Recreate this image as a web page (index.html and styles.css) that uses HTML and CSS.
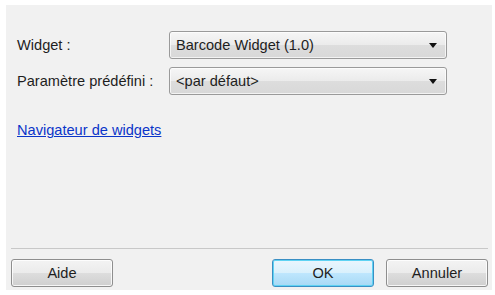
FILE: index.html
```html
<!DOCTYPE html>
<html lang="fr">
<head>
<meta charset="utf-8">
<link rel="stylesheet" href="styles.css">
</head>
<body>
<div class="dialog">
  <div class="content">
    <div class="row">
      <span class="label">Widget :</span>
      <div class="combo"><span class="value">Barcode Widget (1.0)</span><span class="arrow"></span></div>
    </div>
    <div class="row">
      <span class="label">Paramètre prédéfini :</span>
      <div class="combo"><span class="value">&lt;par défaut&gt;</span><span class="arrow"></span></div>
    </div>
    <a class="link" href="#">Navigateur de widgets</a>
  </div>
  <div class="footer">
    <button class="btn">Aide</button>
    <div class="spacer"></div>
    <button class="btn default">OK</button>
    <button class="btn">Annuler</button>
  </div>
</div>
</body>
</html>
```
FILE: styles.css
```css
html, body {
  margin: 0;
  padding: 0;
  background: #ffffff;
}
body {
  width: 495px;
  height: 295px;
  overflow: hidden;
  font-family: "Liberation Sans", Arial, sans-serif;
  font-size: 14.6px;
  color: #1e1e1e;
}
.dialog {
  margin: 5px 3px 5px 6px;
  height: 285px;
  background: #f1f1f1;
  display: flex;
  flex-direction: column;
  box-sizing: border-box;
}
.content {
  flex: 1;
  padding: 26px 0 0 11px;
  display: flex;
  flex-direction: column;
}
.row {
  display: flex;
  align-items: center;
  height: 28px;
  margin-bottom: 8px;
}
.label {
  width: 152px;
  white-space: nowrap;
}
.combo {
  width: 278px;
  height: 28px;
  box-sizing: border-box;
  border: 1px solid #9a9a9a;
  border-radius: 3px;
  background: linear-gradient(#f6f6f6, #ebebeb 50%, #dddddd 51%, #d8d8d8);
  display: flex;
  align-items: center;
  padding: 0 9px 0 6px;
  box-shadow: inset 0 0 0 1px rgba(255,255,255,0.7);
}
.value {
  flex: 1;
}
.arrow {
  width: 0;
  height: 0;
  border-left: 4px solid transparent;
  border-right: 4px solid transparent;
  border-top: 5px solid #111;
}
.link {
  margin-top: 19px;
  color: #0b35c9;
  text-decoration: underline;
  align-self: flex-start;
}
.footer {
  margin: 0 4px 3px 5px;
  border-top: 1px solid #c8c8c8;
  padding-top: 10px;
  display: flex;
  align-items: center;
  gap: 12px;
}
.spacer {
  flex: 1;
}
.btn {
  width: 102px;
  height: 28px;
  box-sizing: border-box;
  font-family: "Liberation Sans", Arial, sans-serif;
  font-size: 14.6px;
  color: #1e1e1e;
  border: 1px solid #8e8e8e;
  border-radius: 3px;
  background: linear-gradient(#f3f3f3, #ebebeb 50%, #dddddd 51%, #cfcfcf);
  box-shadow: inset 0 0 0 1px rgba(255,255,255,0.8);
  padding: 0;
}
.btn.default {
  border-color: #3a8fc4;
  background: linear-gradient(#eaf6fd, #d9f0fc 50%, #bee6fd 51%, #a7d9f5);
  box-shadow: inset 0 0 0 1px #5fd3f3;
}
```
